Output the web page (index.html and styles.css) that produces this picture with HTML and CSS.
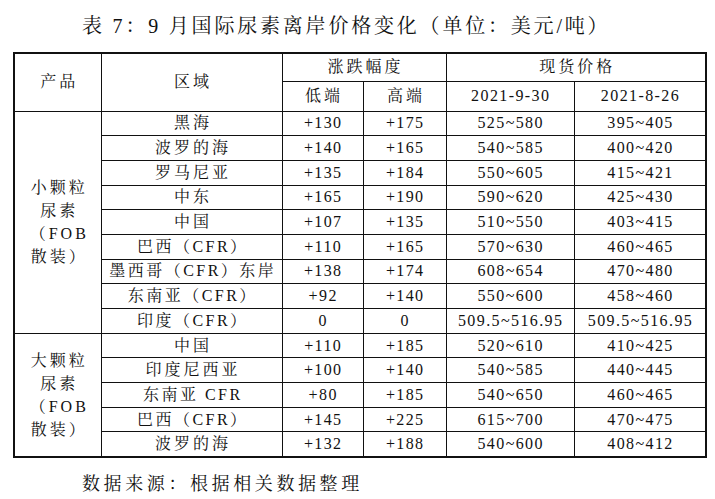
FILE: index.html
```html
<!DOCTYPE html>
<html lang="zh-CN">
<head>
<meta charset="utf-8">
<title>表7 9月国际尿素离岸价格变化</title>
<link rel="stylesheet" href="styles.css">
</head>
<body>
<div class="page">
  <h1 class="title">表 7：9 月国际尿素离岸价格变化（单位：美元/吨）</h1>
  <table class="grid">
    <colgroup>
      <col class="c-prod"><col class="c-area"><col class="c-low"><col class="c-high"><col class="c-p1"><col class="c-p2">
    </colgroup>
    <thead>
      <tr class="h1row">
        <th rowspan="2" class="cj">产品</th>
        <th rowspan="2" class="cj">区域</th>
        <th colspan="2" class="cj">涨跌幅度</th>
        <th colspan="2" class="cj">现货价格</th>
      </tr>
      <tr class="h2row">
        <th class="cj">低端</th>
        <th class="cj">高端</th>
        <th class="num">2021-9-30</th>
        <th class="num">2021-8-26</th>
      </tr>
    </thead>
    <tbody>
      <tr>
        <td rowspan="9" class="group">小颗粒<br>尿素<br>（FOB<br>散装）</td>
        <td class="cj">黑海</td><td class="num">+130</td><td class="num">+175</td><td class="num">525~580</td><td class="num">395~405</td>
      </tr>
      <tr><td class="cj">波罗的海</td><td class="num">+140</td><td class="num">+165</td><td class="num">540~585</td><td class="num">400~420</td></tr>
      <tr><td class="cj">罗马尼亚</td><td class="num">+135</td><td class="num">+184</td><td class="num">550~605</td><td class="num">415~421</td></tr>
      <tr><td class="cj">中东</td><td class="num">+165</td><td class="num">+190</td><td class="num">590~620</td><td class="num">425~430</td></tr>
      <tr><td class="cj">中国</td><td class="num">+107</td><td class="num">+135</td><td class="num">510~550</td><td class="num">403~415</td></tr>
      <tr><td class="mix">巴西（CFR）</td><td class="num">+110</td><td class="num">+165</td><td class="num">570~630</td><td class="num">460~465</td></tr>
      <tr><td class="mix">墨西哥（CFR）东岸</td><td class="num">+138</td><td class="num">+174</td><td class="num">608~654</td><td class="num">470~480</td></tr>
      <tr><td class="mix">东南亚（CFR）</td><td class="num">+92</td><td class="num">+140</td><td class="num">550~600</td><td class="num">458~460</td></tr>
      <tr><td class="mix">印度（CFR）</td><td class="num">0</td><td class="num">0</td><td class="num">509.5~516.95</td><td class="num">509.5~516.95</td></tr>
      <tr>
        <td rowspan="5" class="group">大颗粒<br>尿素<br>（FOB<br>散装）</td>
        <td class="cj">中国</td><td class="num">+110</td><td class="num">+185</td><td class="num">520~610</td><td class="num">410~425</td>
      </tr>
      <tr><td class="cj">印度尼西亚</td><td class="num">+100</td><td class="num">+140</td><td class="num">540~585</td><td class="num">440~445</td></tr>
      <tr><td class="mix">东南亚 CFR</td><td class="num">+80</td><td class="num">+185</td><td class="num">540~650</td><td class="num">460~465</td></tr>
      <tr><td class="mix">巴西（CFR）</td><td class="num">+145</td><td class="num">+225</td><td class="num">615~700</td><td class="num">470~475</td></tr>
      <tr><td class="cj">波罗的海</td><td class="num">+132</td><td class="num">+188</td><td class="num">540~600</td><td class="num">408~412</td></tr>
    </tbody>
  </table>
  <p class="source">数据来源：根据相关数据整理</p>
</div>
</body>
</html>
```

FILE: styles.css
```css
html, body {
  margin: 0;
  padding: 0;
  background: #ffffff;
}

body {
  font-family: "Liberation Serif", "Noto Serif CJK SC", "Noto Sans CJK SC", serif;
  color: #111111;
}

.page {
  width: 715px;
  height: 499px;
  padding-top: 14px;
  box-sizing: border-box;
}

.title {
  margin: 0 0 14px 0;
  padding-left: 82px;
  font-size: 20px;
  line-height: 24px;
  font-weight: normal;
  letter-spacing: 2.8px;
  white-space: nowrap;
}

.grid {
  border-collapse: collapse;
  table-layout: fixed;
  width: 693px;
  margin-left: 13px;
  border: 2px solid #111111;
}

.grid th,
.grid td {
  border: 1px solid #111111;
  padding: 0;
  text-align: center;
  vertical-align: middle;
  font-weight: normal;
  font-size: 16px;
  line-height: 20px;
  white-space: nowrap;
}

.c-prod { width: 87px; }
.c-area { width: 181px; }
.c-low { width: 81px; }
.c-high { width: 83px; }
.c-p1 { width: 128px; }
.c-p2 { width: 132px; }

.h1row { height: 28px; }
.h2row { height: 30px; }
.grid tbody tr { height: 24.7px; }

.cj {
  letter-spacing: 3px;
  padding-left: 3px !important;
}

.mix {
  letter-spacing: 2.5px;
  padding-left: 2.5px !important;
}

.num {
  letter-spacing: 1.4px;
  padding-left: 1.4px !important;
}

.group {
  letter-spacing: 3px;
  line-height: 23px !important;
  padding-left: 3px !important;
}

.source {
  margin: 14px 0 0 0;
  padding-left: 82px;
  font-size: 18px;
  line-height: 24px;
  letter-spacing: 3.6px;
}
```
